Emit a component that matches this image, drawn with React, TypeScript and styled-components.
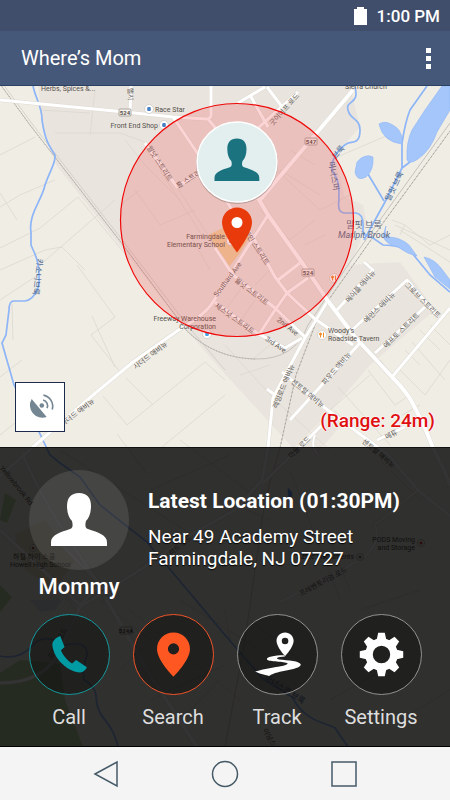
import React from "react";
import styled, { createGlobalStyle } from "styled-components";

const GlobalStyle = createGlobalStyle`
  * { box-sizing: border-box; }
  body { margin: 0; font-family: Roboto, "Noto Sans CJK KR", sans-serif; }
  button { font: inherit; color: inherit; border: 0; padding: 0; background: none; cursor: pointer; }
`;

const Screen = styled.div`
  display: flex;
  flex-direction: column;
  min-height: 100vh;
`;

const StatusBar = styled.div`
  display: flex;
  align-items: center;
  justify-content: flex-end;
  gap: 10px;
  height: 31px;
  padding: 0 10px;
  background: #404e6b;
  color: #fff;
  font-size: 17px;
  font-weight: 500;
`;

const AppBar = styled.header`
  display: flex;
  align-items: center;
  justify-content: space-between;
  height: 55px;
  padding: 0 12px 0 21px;
  background: #465879;
  border-bottom: 1px solid #2b4163;
  color: #fff;
`;

const Title = styled.h1`
  margin: 0;
  font-size: 20px;
  font-weight: 400;
`;

const MenuButton = styled.button`
  display: grid;
  place-content: center;
  gap: 3px;
  width: 19px;
  height: 40px;
`;

const MenuDot = styled.span`
  width: 5px;
  height: 5px;
  background: #fff;
`;

const Stage = styled.main`
  position: relative;
  isolation: isolate;
  display: flex;
  flex-direction: column;
  flex: 1;
`;

const MapCanvas = styled.svg`
  position: absolute;
  inset: 0;
  z-index: -1;
  width: 100%;
  height: 100%;
`;

const MapArea = styled.section`
  display: flex;
  flex: 1;
  align-items: flex-end;
  justify-content: space-between;
  min-height: 260px;
  padding: 15px;
`;

const LocateButton = styled.button`
  display: grid;
  place-items: center;
  width: 50px;
  height: 50px;
  background: #fff;
  border: 1px solid #1c2b4d;
`;

const RangeLabel = styled.p`
  margin: 0;
  color: #e01010;
  font-size: 19px;
  font-weight: 500;
  line-height: 22px;
  text-shadow: 0 0 2px #fff, 0 0 2px #fff, 0 0 1px #fff;
`;

const Panel = styled.section`
  padding: 22px 29px 15px;
  background: rgba(0, 0, 0, 0.8);
  border-top: 1px solid #111;
  border-bottom: 1px solid #000;
  color: #fff;
`;

const Contact = styled.div`
  display: grid;
  grid-template-columns: 100px 1fr;
  gap: 19px;
  margin-bottom: 13px;
`;

const Person = styled.div`
  display: flex;
  flex-direction: column;
  align-items: center;
  gap: 3px;
`;

const Avatar = styled.div`
  display: grid;
  place-items: center;
  width: 100px;
  height: 100px;
  border-radius: 50%;
  background: rgba(255, 255, 255, 0.1);
`;

const Name = styled.strong`
  font-size: 22px;
  font-weight: 500;
  line-height: 28px;
`;

const Details = styled.div`
  padding-top: 17px;
`;

const DetailsTitle = styled.h2`
  margin: 0 0 11px;
  font-size: 21px;
  font-weight: 700;
  line-height: 28px;
  white-space: nowrap;
`;

const Address = styled.address`
  font-size: 19px;
  font-style: normal;
  line-height: 22px;
  text-shadow: 0 1px 1px #000;
`;

const Actions = styled.nav`
  display: flex;
  justify-content: space-between;
`;

const Action = styled.button`
  display: flex;
  flex-direction: column;
  align-items: center;
  gap: 8px;
  width: 80px;
  color: #dedede;
  font-size: 20px;
  line-height: 28px;
`;

const ActionDisc = styled.span<{ $ring: string }>`
  display: block;
  width: 81px;
  height: 81px;
  border: 1px solid ${(p) => p.$ring};
  border-radius: 50%;
  background: rgba(16, 16, 16, 0.5);
`;

const NavBar = styled.nav`
  display: flex;
  align-items: center;
  justify-content: center;
  gap: 71px;
  height: 53px;
  background: #f4f4f4;
`;

const NavButton = styled.button`
  display: grid;
  place-items: center;
  width: 48px;
  height: 48px;
`;

const RoadLabel = styled.text`
  fill: #5f5b57;
  font-size: 7px;
  text-anchor: middle;
`;

const WaterLabel = styled(RoadLabel)`
  fill: #43638e;
  font-size: 8px;
`;

const PlaceLabel = styled.text<{ $anchor?: "start" | "end" }>`
  fill: #55504c;
  font-size: 7px;
  text-anchor: ${(p) => p.$anchor ?? "start"};
`;

const PERSON =
  "M28 0C36 0 40 5 40 13C40 20 38 25 35 28C34 32 34 35 37 36C46 39 56 42 56 49V53H0V49C0 42 10 39 19 36C22 35 22 32 21 28C18 25 16 20 16 13C16 5 20 0 28 0Z";

const roads: [string, number][] = [
  ["M0 100L125 112L173 117L206 119Q212 119 211 112V86", 3],
  ["M208 119L218 131L240 170", 3],
  ["M173 117L200 157L232 210L253 237L275 277L287 293L315 319L353 345", 3],
  ["M258 198L268 215L303 264L328 301L355 337L392 377Q407 392 413 404L425 428L433 448L440 462Q447 475 450 486", 4],
  ["M353 90L260 200", 4],
  ["M268 215L235 267L213 302Q206 314 180 329L133 362L93 395L33 447L0 476", 3],
  ["M392 377L450 308", 3],
  ["M238 103L265 87M250 95L268 127M267 87L283 108M298 92L258 128", 3],
  ["M131 86L130 113M145 143L177 187L200 172", 3],
  ["M278 280L300 263M215 248L233 275L275 308L305 337", 3],
  ["M308 278L287 293L273 313L260 333M215 302L257 333L285 348L302 338", 3],
  ["M327 302L305 338L285 375L273 398L268 448L262 480L235 510", 3],
  ["M337 310L373 270L364 262", 3],
  ["M352 330L407 280L438 317M375 353L425 307", 3],
  ["M360 343L290 420M282 372L325 408L388 455L418 490L450 516", 3],
  ["M267 389L275 395M322 425L292 455L262 484M377 440L405 427", 3],
  ["M315 435Q310 448 319 455", 2],
  ["M22 452Q40 500 100 585L80 605L0 530M62 545L115 600", 3],
  ["M105 597L150 675L197 747", 4],
  ["M0 683Q45 683 60 650L80 607L140 570L190 535L235 510", 3],
  ["M418 490L375 525Q382 545 360 560L280 602", 2],
];

const plots = [
  "M0 155L35 137M0 207L20 195L55 180M0 248L40 228L78 197M0 270L45 250L62 247M0 193L17 220M78 197L130 260",
  "M40 265L115 200M62 247L85 270M92 316L115 367M77 265L115 317L91 335L120 372M126 378L153 405M103 396L127 425L205 362",
  "M0 300L38 275M12 304L13 340M0 377L22 360M0 435L25 415M117 434L147 474M162 447L225 395M205 362L225 380",
  "M55 133H120L145 142M95 90L90 135M40 110L90 113M125 140L145 165L180 200M135 190L160 225L195 210M120 205L140 190",
  "M255 150L320 210L350 195M260 210L290 240L315 220M280 170L320 195M290 150L315 165M305 245L325 235",
  "M177 187L208 235L233 275M160 170L205 240M190 235L210 270M240 290L225 310M255 300L240 322M270 270L255 285",
  "M337 157L400 130M392 220L405 225L400 235M405 225L430 245L450 235M395 225L450 250M400 230L450 262",
  "M368 370L395 405M380 360L398 382M400 370L425 395L450 360M405 350L420 365M412 342L445 380M420 330L440 350M430 325L450 345",
  "M338 387L390 445M370 375L330 410M395 405L410 395M402 415L420 405M225 345L275 400L330 450M240 375L270 365M252 360L270 345",
  "M180 440L260 500M60 450L200 540M150 490L230 455M290 470L340 600M380 460L420 500M330 540L350 590M225 500L270 520",
  "M130 610L240 700M180 600L260 650M150 700L225 665M250 620L300 660M360 610L420 590M330 700L400 660M400 720L450 690",
  "M100 600L150 640L120 670M180 720L220 680M225 610L230 640M280 720L300 700M40 605L60 590L80 615",
];

const streams = [
  "M33 86C36 100 42 106 42 120C45 140 49 146 55 155C56 163 50 170 45 185C42 200 28 215 31 232V245C35 255 40 260 39 285C35 298 28 301 25 301H14Q9 301 9 310L6 335L2 343L14 385L39 432L50 455L60 463L80 477L100 505L147 542L200 605L225 635L262 678L292 697C305 722 325 722 335 728L348 747",
  "M427 86L410 110C406 120 404 130 402 143V168L385 202L374 222L364 240M402 168L410 162M368 174L384 201",
  "M355 87C360 105 345 100 348 110C350 120 360 118 360 130C360 143 354 142 348 143C340 147 330 160 332 170C342 185 338 192 339 200Q337 213 345 213H356Q364 214 363 228V234L373 238L383 245Q405 246 412 253L430 275L450 292",
  "M0 656Q20 660 32 646T65 645Q88 640 87 655Q82 670 84 680Q95 686 96 695Q96 710 105 720Q115 732 118 747",
];

type Label = [string, number, number, number];
const roadLabels: Label[] = [
  ["굿이어프 로드", 284, 109, -48],
  ["핼시", 131, 94, 88],
  ["월넛 스트리트", 160, 163, 57],
  ["홀 스트리트", 191, 177, -32],
  ["메인 스트리트", 257, 247, 57],
  ["월넛 스트리트", 252, 291, 38],
  ["체스넛 스트리트", 235, 318, 36],
  ["Southard Ave", 227, 279, -53],
  ["2nd Ave", 288, 326, 38],
  ["3rd Ave", 276, 344, 34],
  ["사더드 애비뉴", 150, 355, -37],
  ["사더드 애비뉴", 77, 412, -37],
  ["메이플 애비뉴", 360, 286, -48],
  ["에먼스 애비뉴", 379, 307, -44],
  ["그로브 스트리트", 423, 300, 45],
  ["에프토 스트리트", 401, 330, -44],
  ["파우드 애비뉴", 336, 368, -49],
  ["레잉로드 애비뉴", 283, 386, -68],
  ["센트럴 애비뉴", 308, 393, 39],
  ["메튜", 391, 434, -25],
  ["마을 로드", 299, 447, -44],
  ["센트럴 애비뉴", 379, 453, 40],
  ["Yellowbrook Rd", 17, 485, 51],
  ["프레벤토리엄 로드", 323, 581, -28],
  ["프레벤 로드", 57, 643, -62],
  ["아담스", 270, 737, 60],
  ["리드 로드", 180, 545, -38],
];
const waterLabels: Label[] = [
  ["카소니브룩", 38, 277, 97],
  ["브룩", 338, 152, -50],
  ["마너스머", 334, 176, 80],
  ["말핏 브룩", 394, 186, -64],
  ["마너스콴 브룩", 285, 689, 33],
];

const gearTeeth = [0, 45, 90, 135, 180, 225, 270, 315];

function renderLabel(Tag: React.ElementType, [text, x, y, angle]: Label) {
  return (
    <Tag key={`${text}${x}`} transform={`translate(${x} ${y}) rotate(${angle})`} dy="3">
      {text}
    </Tag>
  );
}

function RouteShield({ x, y, children }: { x: number; y: number; children: string }) {
  return (
    <g>
      <rect x={x - 6} y={y - 4} width="12" height="7" rx="1" fill="#f6f2ec" stroke="#9b9690" strokeWidth="0.8" />
      <text x={x} y={y + 2} fontSize="6" fontWeight="700" textAnchor="middle" fill="#56514d">
        {children}
      </text>
    </g>
  );
}

function Poi({ x, y, color, food }: { x: number; y: number; color: string; food?: boolean }) {
  return (
    <g transform={`translate(${x} ${y})`}>
      <circle r="4.5" fill="#fff" stroke="#c8c5c0" strokeWidth="0.7" />
      {food ? (
        <path d="M-1.5 -2.5V2.5M1.5 -2.5V2.5M-2.3 -2V0H-0.7V-2" stroke={color} strokeWidth="1" fill="none" />
      ) : (
        <rect x="-1.8" y="-2" width="3.6" height="4" rx="1" fill={color} />
      )}
    </g>
  );
}

function DimPoi({ x, y, color }: { x: number; y: number; color: string }) {
  return (
    <g transform={`translate(${x} ${y})`}>
      <circle r="3.5" fill="#f6f3ee" stroke="#a9a5a0" strokeWidth="0.8" />
      <circle r="1.5" fill={color} />
    </g>
  );
}

function TownMap() {
  return (
    <MapCanvas viewBox="0 86 450 661" preserveAspectRatio="xMidYMid slice" role="img" aria-label="Map of Farmingdale">
      <rect x="-1000" y="-1000" width="3000" height="3000" fill="#f0ede5" />
      <path
        d="M38 86H350L360 127L335 155L345 197L363 205L367 225L350 265L400 262L435 310L370 365L330 412L295 447H292L225 374L190 334L56 165L42 120Z"
        fill="#e9e5de"
      />
      <path d="M298 447L335 410L345 420L320 450Z" fill="#e9e5de" />
      <path d="M208 235L225 227L250 237L240 253L228 268Z" fill="#efd3a0" />
      <path d="M5 493L16 500L7 523L0 520ZM0 585L12 597L0 612ZM0 673L20 660L60 664L65 700L83 747H0Z" fill="#b7d6a0" />
      <path d="M15 535L45 520L75 560L55 590L25 570Z" fill="#ebe0c9" />
      <path d="M30 600H62L55 610L40 612Z" fill="#d7dae5" />
      {plots.map((d) => (
        <path key={d} d={d} fill="none" stroke="#dcd8d0" strokeWidth="0.8" />
      ))}
      <g fill="none" stroke="#c6c2bb" strokeWidth="1">
        <path d="M0 84L30 125L120 241L187 331Q215 358 255 359T308 325L348 265L380 220L450 123" />
        <path d="M3 84L33 125L123 241L187 325L225 370" strokeWidth="0.6" />
        <path d="M453 127L383 223L320 312L296 375L280 448L265 500L245 640L225 747" strokeWidth="0.8" />
        <path d="M453 127L383 223L320 312L296 375L280 448" strokeDasharray="2 2" stroke="#a9a5a0" />
        <path d="M0 84L30 125L120 241L187 331Q215 358 255 359" strokeDasharray="1 2" stroke="#aaa6a0" />
      </g>
      {streams.map((d) => (
        <path key={d} d={d} fill="none" stroke="#8db5f7" strokeWidth="1.7" />
      ))}
      <g fill="#a4c6fb" stroke="#8db5f7" strokeWidth="0.6">
        <path d="M442 86L425 110L412 130Q406 142 407 160Q409 165 418 159Q431 150 437 132L450 110V86Z" />
        <path d="M379 124Q386 119 397 128Q403 134 402 144Q383 142 379 124Z" />
        <path d="M357 162Q365 153 373 157Q374 170 366 177Q357 182 355 172Z" />
        <path d="M386 226Q384 234 388 237Q400 237 409 245L417 256Q407 254 398 247Q385 244 383 236Z" />
        <path d="M424 257Q434 259 441 268L450 280V289L435 277Z" />
        <path d="M288 488L292 492V502L288 498Z" fill="#5f95ee" />
      </g>
      <g fill="none" strokeLinejoin="round">
        {roads.map(([d, width]) => (
          <path key={d} d={d} stroke="#dedad3" strokeWidth={width + 1} />
        ))}
        {roads.map(([d, width]) => (
          <path key={d} d={d} stroke="#fff" strokeWidth={width} />
        ))}
      </g>
      {roadLabels.map((label) => renderLabel(RoadLabel, label))}
      {waterLabels.map((label) => renderLabel(WaterLabel, label))}
      <RouteShield x={125} y={113}>524</RouteShield>
      <RouteShield x={311} y={142}>547</RouteShield>
      <RouteShield x={308} y={273}>524</RouteShield>
      <RouteShield x={126} y={631}>524A</RouteShield>
      <Poi x={149} y={109} color="#4a80c4" />
      <Poi x={164} y={125} color="#4a80c4" />
      <Poi x={207} y={334} color="#43a5e8" />
      <Poi x={231} y={241} color="#a77e63" />
      <Poi x={334} y={278} color="#ee8b2b" food />
      <Poi x={322} y={335} color="#ee8b2b" food />
      <DimPoi x={33} y={548} color="#a05a38" />
      <DimPoi x={360} y={557} color="#777" />
      <DimPoi x={421} y={543} color="#d4443c" />
      <PlaceLabel x="41" y="91">Herbs, Spices &amp;...</PlaceLabel>
      <PlaceLabel x="345" y="89">Sierra Church</PlaceLabel>
      <PlaceLabel x="155" y="112">Race Star</PlaceLabel>
      <PlaceLabel x="158" y="128" $anchor="end">Front End Shop</PlaceLabel>
      <PlaceLabel x="225" y="239" $anchor="end">Farmingdale</PlaceLabel>
      <PlaceLabel x="225" y="247" $anchor="end">Elementary School</PlaceLabel>
      <PlaceLabel x="216" y="321" $anchor="end">Freeway Warehouse</PlaceLabel>
      <PlaceLabel x="216" y="329" $anchor="end">Corporation</PlaceLabel>
      <PlaceLabel x="328" y="333">Woody’s</PlaceLabel>
      <PlaceLabel x="328" y="341">Roadside Tavern</PlaceLabel>
      <PlaceLabel x="415" y="542" $anchor="end">PODS Moving</PlaceLabel>
      <PlaceLabel x="415" y="550" $anchor="end">and Storage</PlaceLabel>
      <PlaceLabel x="354" y="559" $anchor="end">Aztec Instruments</PlaceLabel>
      <PlaceLabel x="13" y="559">하월 하이 스쿨</PlaceLabel>
      <PlaceLabel x="10" y="567">Howell High School</PlaceLabel>
      <g fill="#626a85" fontSize="9" textAnchor="middle">
        <text x="364" y="228">말핏 브룩</text>
        <text x="364" y="238" fontStyle="italic">Marlpit Brook</text>
      </g>

      <circle cx="237" cy="220" r="116.5" fill="#f05050" fillOpacity="0.24" stroke="#f00808" strokeWidth="1.2" />
      <circle cx="237" cy="163" r="41" fill="#8e7775" fillOpacity="0.5" />
      <circle cx="237" cy="162" r="40" fill="#e3efef" stroke="#fff" strokeWidth="1.5" />
      <path d={PERSON} transform="translate(214.5 138.5) scale(0.8)" fill="#1b7380" />
      <path
        fillRule="evenodd"
        fill="#e93a0c"
        d="M237 207.5C229 207.5 222 214 222 222.5C222 233 237 252.5 237 252.5S252 233 252 222.5C252 214 245 207.5 237 207.5Z"
      />
      <circle cx="237" cy="222.5" r="5.5" fill="#fff" />
    </MapCanvas>
  );
}

function PhoneIcon() {
  return (
    <svg width="79" height="79" viewBox="0 0 240 240" aria-hidden="true">
      <path
        fill="#009ba3"
        d="M92 64L105 97L94 107C99 120 112 138 128 147L140 137L173 159C168 170 160 175 149 175C112 171 72 132 68 93C67 81 76 69 92 64Z"
      />
    </svg>
  );
}

function PinIcon() {
  return (
    <svg width="79" height="79" viewBox="0 0 240 240" aria-hidden="true">
      <path
        fill="#ff5722"
        fillRule="evenodd"
        d="M120 53C92 53 70 75 70 103C70 138 120 187 120 187S170 138 170 103C170 75 148 53 120 53ZM120 86A17 17 0 1 1 120 120A17 17 0 1 1 120 86Z"
      />
    </svg>
  );
}

function TrackIcon() {
  return (
    <svg width="79" height="79" viewBox="0 0 240 240" aria-hidden="true">
      <path
        fill="#fff"
        fillRule="evenodd"
        d="M143 53C128 53 117 65 117 79C117 97 143 125 143 125S169 97 169 79C169 65 158 53 143 53ZM143 69A10 10 0 1 1 143 89A10 10 0 1 1 143 69Z"
      />
      <path
        fill="#fff"
        d="M139 122C111 122 85 127 88 135C94 143 142 140 151 147C149 157 91 158 52 172L66 178L95 185C121 166 184 169 191 151C189 139 151 138 125 135C112 132 119 127 143 126Z"
      />
    </svg>
  );
}

function GearIcon() {
  return (
    <svg width="79" height="79" viewBox="0 0 240 240" aria-hidden="true">
      <circle cx="120" cy="120" r="38" fill="none" stroke="#fff" strokeWidth="23" />
      {gearTeeth.map((angle) => (
        <path key={angle} d="M105 77L110 54H130L135 77Z" fill="#fff" transform={`rotate(${angle} 120 120)`} />
      ))}
    </svg>
  );
}

function DishIcon() {
  return (
    <svg width="48" height="48" viewBox="0 0 147 147" aria-hidden="true">
      <path d="M48 49A38 38 0 0 0 94 104Z" fill="#748692" />
      <circle cx="79" cy="69" r="7" fill="#748692" />
      <g fill="none" stroke="#748692" strokeWidth="5">
        <path d="M83 52A18 18 0 0 1 95 77" />
        <path d="M84 37A35 35 0 0 1 111 81" />
      </g>
    </svg>
  );
}

const actions = [
  { label: "Call", ring: "#14989d", Icon: PhoneIcon },
  { label: "Search", ring: "#f05429", Icon: PinIcon },
  { label: "Track", ring: "#929292", Icon: TrackIcon },
  { label: "Settings", ring: "#929292", Icon: GearIcon },
];

export default function App() {
  return (
    <Screen>
      <GlobalStyle />
      <StatusBar>
        <svg width="13" height="18" viewBox="0 0 13 18" aria-hidden="true">
          <path d="M3 0H10V2H13V18H0V2H3Z" fill="#fff" />
        </svg>
        <span>1:00 PM</span>
      </StatusBar>
      <AppBar>
        <Title>Where’s Mom</Title>
        <MenuButton aria-label="More options">
          <MenuDot />
          <MenuDot />
          <MenuDot />
        </MenuButton>
      </AppBar>
      <Stage>
        <TownMap />
        <MapArea>
          <LocateButton aria-label="Locate">
            <DishIcon />
          </LocateButton>
          <RangeLabel>(Range: 24m)</RangeLabel>
        </MapArea>
        <Panel>
          <Contact>
            <Person>
              <Avatar>
                <svg width="56" height="54" viewBox="0 0 56 54" aria-hidden="true">
                  <path d={PERSON} fill="#fff" />
                </svg>
              </Avatar>
              <Name>Mommy</Name>
            </Person>
            <Details>
              <DetailsTitle>Latest Location (01:30PM)</DetailsTitle>
              <Address>
                Near 49 Academy Street
                <br />
                Farmingdale, NJ 07727
              </Address>
            </Details>
          </Contact>
          <Actions>
            {actions.map(({ label, ring, Icon }) => (
              <Action key={label}>
                <ActionDisc $ring={ring}>
                  <Icon />
                </ActionDisc>
                {label}
              </Action>
            ))}
          </Actions>
        </Panel>
      </Stage>
      <NavBar>
        <NavButton aria-label="Back">
          <svg width="28" height="28" viewBox="0 0 28 28" fill="none" stroke="#455a67" strokeWidth="1.5" aria-hidden="true">
            <path d="M3 14L25 2V26Z" />
          </svg>
        </NavButton>
        <NavButton aria-label="Home">
          <svg width="28" height="28" viewBox="0 0 28 28" fill="none" stroke="#455a67" strokeWidth="1.5" aria-hidden="true">
            <circle cx="14" cy="14" r="12.5" />
          </svg>
        </NavButton>
        <NavButton aria-label="Recent apps">
          <svg width="28" height="28" viewBox="0 0 28 28" fill="none" stroke="#455a67" strokeWidth="1.5" aria-hidden="true">
            <path d="M2 2H26V26H2Z" />
          </svg>
        </NavButton>
      </NavBar>
    </Screen>
  );
}
